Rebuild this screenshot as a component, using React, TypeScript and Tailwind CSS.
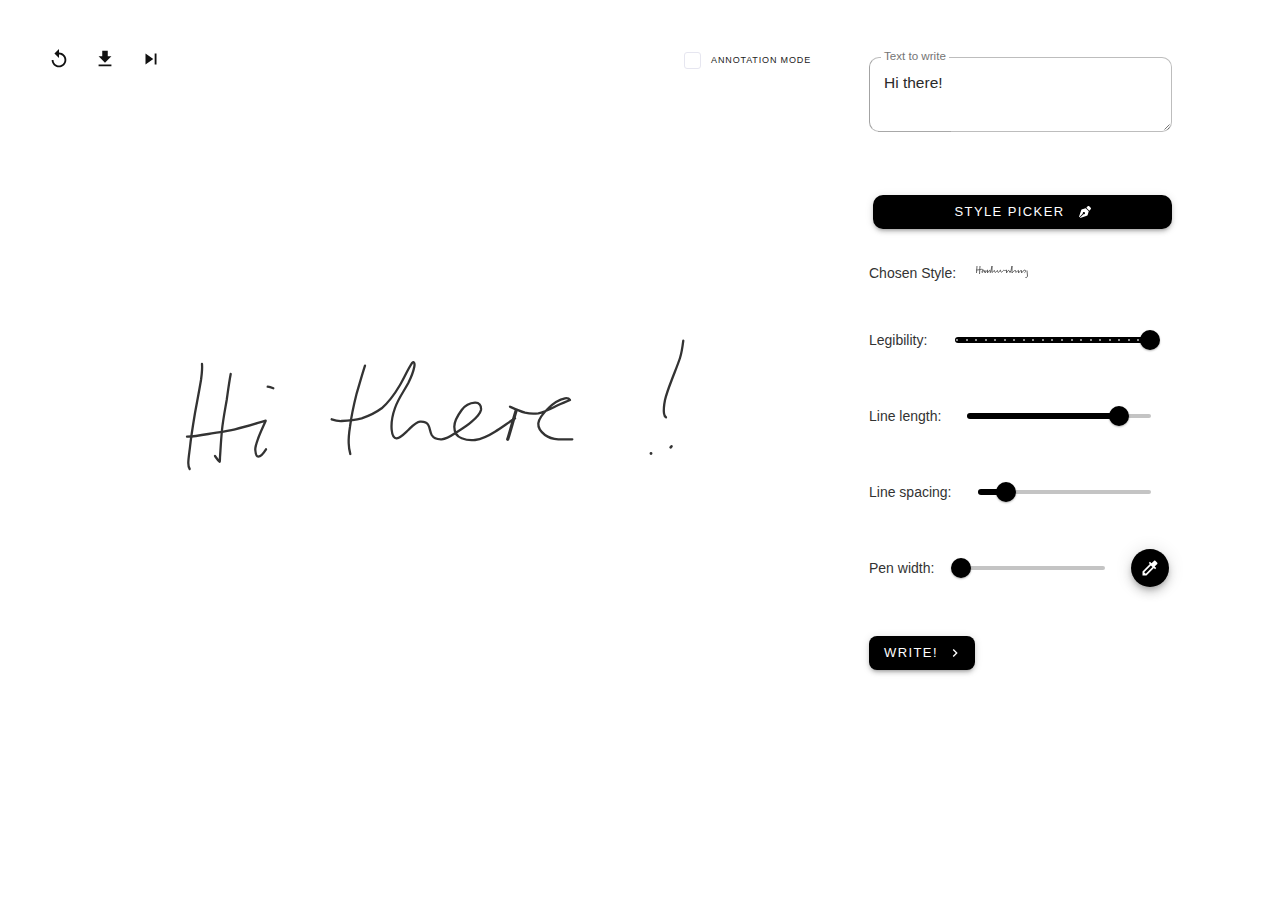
import { FaPenNib } from "react-icons/fa";

const font = { fontFamily: '"Liberation Sans", Arial, sans-serif' };

function MuiIcon({ d, className }: { d: string; className?: string }) {
  return (
    <svg viewBox="0 0 24 24" fill="currentColor" className={className}>
      <path d={d} />
    </svg>
  );
}

const toolbarIcons = [
  "M12 5V1L7 6l5 5V7c3.31 0 6 2.69 6 6s-2.69 6-6 6-6-2.69-6-6H4c0 4.42 3.58 8 8 8s8-3.58 8-8-3.58-8-8-8z",
  "M19 9h-4V3H9v6H5l7 7 7-7zM5 18v2h14v-2H5z",
  "M6 18l8.5-6L6 6v12zM16 6v12h2V6h-2z",
];

// strokes of the generated handwriting, in page coordinates
const strokes = [
  "M202 364C202.500 370 201.500 376 201 380C199 392 197 402 195 413C193 425 191 437 190 447C189.300 453 188.300 459 188.300 463C188.300 466 189 468 189.700 469",
  "M230.700 374C229 383 228 391 226.700 400C225 410 223 420 222 430C221 440 220.500 450 220 457C219.900 460 219.900 462 219.500 461.700C218 460.500 216.500 458 215 456",
  "M187 436.700C194 436.500 201 435.300 208.300 434C217 432.500 226 431.500 235 429.300C245 427 256 423.500 265.700 420.700C263 427 260.500 432 258.300 438C256.500 443 255 447 255.300 450C255.600 454 256.500 456.700 258.300 456.700C261 456.500 264 452.500 266 449.300",
  "M267.700 386.700C269.500 386.800 271.500 387.500 273.300 388.300",
  "M365 365.700C362 375 359.500 384 356.700 393.300C354 404 351.500 415 350 426.700C349 433 348.500 438 348.700 443.300C348.800 447.500 349.500 451 350.300 454",
  "M331.700 419.300C335 420.500 338 421.200 341.700 421C348 420.700 355 420 361.700 418.300C369 416 376 412.500 381.700 408.300C389 402 395 393.500 400 385C404 378 408 369 412.300 362.700C414 361 415 363.500 414.300 366.700C413.300 372 411 377.500 408.300 383C404 391 398 399 395 408C392.500 415 391 423 391.700 430C392.200 435 394 438.500 396.700 438.300C400.500 438 404.500 433.500 408.300 430C412 426.500 416 422 420 421.700C424 421.500 427 422.500 428.300 425C430 428 430 432 431.700 435C433.500 438 437 439.500 441.700 439.300C446 439 451 436 455 433.300C461 429.500 467 426 471.700 421.700C476 418 480 414.500 481 410C481.500 405.500 479 402.500 475 402.700C470 403 465 405.500 461.700 410C458 415 454.300 421 454.300 426.700C454.300 432 457 436.500 461.700 438.300C466 440 471 440.500 475 440C482 439 489 435.500 495 431.700C502 427.500 509 422 515 418.300",
  "M510 406.700C514 408.500 519.500 411 525 412.700C529.500 413.800 534 414 538.300 413.300C545 412 552 408 558.300 405C562 403.300 567 401.500 570 400C569 398.500 567 398 565 398.300C559 399.500 553 403.500 548.300 408.300C544 412.500 539 418 538.300 423.300C538 428 541 432 545 435C549 438 553.500 439 558.300 439.300C563 439.600 568 439.400 572.300 439.300",
  "M683.300 340.700C682.500 347 681.800 352.500 680 358C677.500 365.500 674.500 372.500 671.700 380C669 387 666.500 393.500 665 400C664 405 663.500 409.500 664 413.300C664.300 415.500 665 416.700 666 417.300",
];

function Handwriting() {
  return (
    <svg
      viewBox="180 330 520 150"
      fill="none"
      stroke="#333333"
      strokeWidth="2.300"
      strokeLinecap="round"
      strokeLinejoin="round"
      className="ml-[180px] mt-[258px] block h-[150px] w-[520px]"
    >
      {strokes.map((d) => (
        <path key={d} d={d} />
      ))}
      <path d="M516 411C513 421 510 432 507.700 439.300" strokeWidth="3.200" />
      <path d="M651 453.300L651 453.600" strokeWidth="2.800" />
      <path d="M671.500 446.300L670.600 447.300" strokeWidth="2.600" />
    </svg>
  );
}

function StyleThumb() {
  return (
    <svg
      viewBox="0 0 56 18"
      fill="none"
      stroke="#555555"
      strokeWidth="0.9"
      className="h-[18px] w-[56px] blur-[0.3px]"
    >
      <path d="M2 2L1.500 9M5 2L4.500 10M1 6C3 6 5 5.500 6 5.500C7 5 8 5 8 7C8 9 6.500 9 7 7.500C8 5.500 9.500 6 9.500 8L10 6.500V9C11 8 12 6 12.500 6V9C13 8 14 6 15 6.500C15.500 7 14.500 9 15.500 8.500L17 2V8.500C18 8 19 6.500 19.500 6.500C19.500 8 20 9 21 8C22 7 22 6.500 22.500 6.500C22.500 8 23 9 24 8C24.500 7.500 25 6 25.500 6C25.500 8 26.500 9 27.500 7.500C28.500 6 29 6 29.500 6.500C30 7 31 6 31.500 6V9C32 8 33 6 34 6.500L35 8.500L36 6.500L37 2V9C38 8 39.500 6 40.500 6.500C41 8 40 9 41.500 8C42.500 7 43 6 43.500 6.500V9C44.500 8 45.500 6 46.500 6.500V9C47.500 8 48.500 6 50 6C51.500 6.500 50 9 49.500 8.500M52 6.500L52.500 12C52 14 50.500 14 50.500 13" />
    </svg>
  );
}

function Slider({
  width,
  value,
  marks,
}: {
  width: number;
  value: number;
  marks?: boolean;
}) {
  return (
    <div className="relative h-5 flex-none" style={{ width }}>
      <div className="absolute left-0 right-0 top-2 h-1 rounded-full bg-[#c4c4c4]" />
      <div
        className="absolute left-0 top-[7px] flex h-1.5 items-center justify-between rounded-full bg-black px-[1px]"
        style={{ width: value }}
      >
        {marks &&
          Array.from({ length: 21 }).map((_, i) => (
            <span key={i} className="h-[2px] w-[2px] rounded-full bg-[#bdbdbd]" />
          ))}
      </div>
      <div
        className="absolute top-0 -ml-2.5 h-5 w-5 rounded-full bg-black shadow-[0_1px_2px_rgba(0,0,0,0.3)]"
        style={{ left: value }}
      />
    </div>
  );
}

export default function App() {
  return (
    <main className="flex h-[898px] w-full overflow-hidden bg-white text-[#333333]" style={font}>
      <section className="w-[869px] flex-none">
        <div className="mt-[48px] flex h-6 w-[811px] items-center justify-between pl-[48px]">
          <div className="-mt-[2px] flex items-center gap-6">
            {toolbarIcons.map((d) => (
              <button key={d} type="button" className="h-[22px] w-[22px] text-[#111111]">
                <MuiIcon d={d} className="h-[22px] w-[22px]" />
              </button>
            ))}
          </div>
          <label className="flex items-center gap-[10px]">
            <span className="h-[17px] w-[17px] rounded-[3px] border border-[#e6e6f0] bg-white" />
            <span className="mt-[2px] text-[9px] uppercase tracking-[0.85px] text-[#222222]">
              Annotation mode
            </span>
          </label>
        </div>
        <Handwriting />
      </section>

      <section className="w-[303px] flex-none pt-[57px]">
        <div className="relative h-[75px] rounded-[10px] border border-[#bdbdbd] border-l-[#a3a3a3]">
          <span className="absolute left-[11px] top-[-10px] bg-white px-[3px] text-[11.600px] leading-[16px] text-[#757575]">
            Text to write
          </span>
          <div className="pl-[14px] pt-[15px] text-[15.500px] leading-[20px] text-[#2a2a2a]">Hi there!</div>
          <span className="absolute -bottom-px left-2 h-px w-[73px] bg-[#a8a8a8]" />
          <svg viewBox="0 0 6 6" className="absolute bottom-[1px] right-[1px] h-1.5 w-1.5" stroke="#555555" strokeWidth="0.8">
            <path d="M0.500 5.500L5.500 0.500M3.500 5.500L5.500 3.500" />
          </svg>
        </div>

        <button
          type="button"
          className="ml-1 mt-[63px] flex h-[34px] w-[299px] items-center justify-center gap-[14px] rounded-[10px] bg-black text-[13px] tracking-[1.4px] text-white shadow-[0_3px_3px_-2px_rgba(0,0,0,0.2),0_3px_4px_rgba(0,0,0,0.14),0_1px_8px_rgba(0,0,0,0.12)]"
        >
          STYLE PICKER
          <FaPenNib className="h-[12px] w-[12px]" />
        </button>

        <div className="mt-[34px] flex h-5 items-center text-sm">
          <span>Chosen Style:</span>
          <div className="ml-[19px]">
            <StyleThumb />
          </div>
        </div>

        <div className="mt-[37px] flex h-10 items-center text-sm">
          <span className="w-[86px]">Legibility:</span>
          <Slider width={195} value={195} marks />
        </div>
        <div className="mt-9 flex h-10 items-center text-sm">
          <span className="w-[98px]">Line length:</span>
          <Slider width={184} value={152} />
        </div>
        <div className="mt-9 flex h-10 items-center text-sm">
          <span className="w-[109px]">Line spacing:</span>
          <Slider width={173} value={28} />
        </div>
        <div className="mt-9 flex h-10 items-center text-sm">
          <span className="w-[92px]">Pen width:</span>
          <Slider width={144} value={0} />
          <button
            type="button"
            className="ml-[26px] flex h-[38px] w-[38px] flex-none items-center justify-center rounded-full bg-black text-white shadow-[0_3px_5px_-1px_rgba(0,0,0,0.2),0_6px_10px_rgba(0,0,0,0.14),0_1px_18px_rgba(0,0,0,0.12)]"
          >
            <MuiIcon
              d="M20.710 5.630l-2.340-2.340c-.39-.39-1.020-.39-1.410 0l-3.120 3.120-1.930-1.910-1.410 1.410 1.420 1.420L3 16.250V21h4.750l8.920-8.920 1.420 1.420 1.410-1.410-1.920-1.920 3.120-3.120c.4-.4.4-1.030.01-1.420zM6.920 19L5 17.080l8.060-8.060 1.920 1.920L6.920 19z"
              className="h-5 w-5"
            />
          </button>
        </div>

        <button
          type="button"
          className="mt-12 flex h-[34px] w-[106px] items-center rounded-[8px] bg-black pl-[15px] text-[13px] tracking-[1.4px] text-white shadow-[0_3px_3px_-2px_rgba(0,0,0,0.2),0_3px_4px_rgba(0,0,0,0.14),0_1px_8px_rgba(0,0,0,0.12)]"
        >
          WRITE!
          <MuiIcon d="M10 6L8.590 7.410 13.170 12l-4.580 4.590L10 18l6-6z" className="ml-[9px] h-4 w-4" />
        </button>
      </section>
    </main>
  );
}
